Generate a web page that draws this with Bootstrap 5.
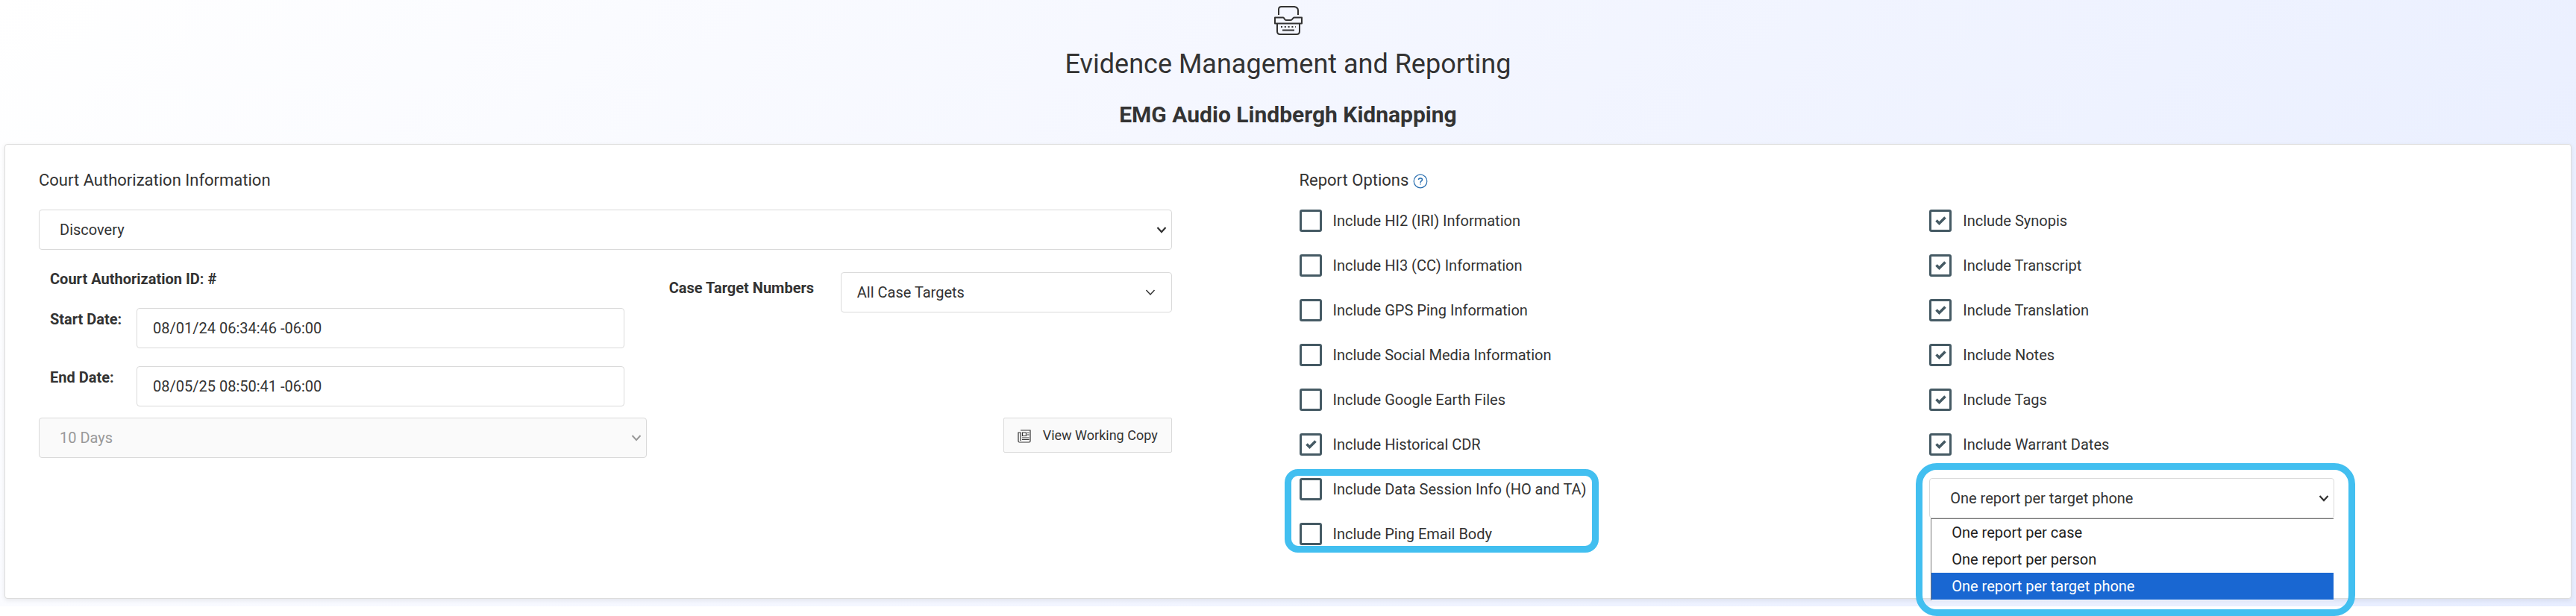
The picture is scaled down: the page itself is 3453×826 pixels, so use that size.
<!DOCTYPE html>
<html lang="en">
<head>
<meta charset="utf-8">
<meta name="viewport" content="width=device-width, initial-scale=1">
<title>Evidence Management and Reporting</title>
<link rel="stylesheet" href="https://cdn.jsdelivr.net/npm/bootstrap@5.3.0/dist/css/bootstrap.min.css">
<style>
  body { font-family: Roboto, "Liberation Sans", sans-serif; font-size: 20px; line-height: 30px; color: #333; background: #fff; min-height: 100vh; }
  .page-shell { background: linear-gradient(135deg, #fff 0%, #f5f7ff 40%, #e7edff 100%); padding: 0 6px 10px; }
  .page-head svg { display: block; margin: 0 auto; padding-top: 6px; }
  .page-title { font-size: 36px; line-height: 46px; font-weight: 400; margin: 15px 0 0; }
  .case-title { font-size: 30px; line-height: 36px; font-weight: 700; margin: 27px 0 0; }
  .panel { border: 1px solid #dcdcdc; border-radius: 4px; background: #fff; margin-top: 21px; min-height: 610px; padding: 33px 45px 0; box-shadow: 0 2px 6px rgba(0,0,0,.08); }
  .panel > .row, .panel .inner { --bs-gutter-x: 30px; }
  .section-title { font-size: 22px; line-height: 30px; font-weight: 400; margin: 0 0 24px; }
  .field { font-size: 20px; line-height: 30px; height: 54px; color: #333; border: 1px solid #dadada; border-radius: 4px; padding: 0 21px; background-color: #fff; }
  select.field { padding: 0 40px 0 27px; background-position: right 6px center; background-size: 14px 14px;
    background-image: url("data:image/svg+xml,%3Csvg xmlns='http://www.w3.org/2000/svg' viewBox='0 0 14 14'%3E%3Cpath d='M1.5 4l5.500 6 5.500-6' fill='none' stroke='%23333' stroke-width='2.200'/%3E%3C/svg%3E"); }
  select.field:disabled { background-color: #fafafa; color: #999; opacity: 1;
    background-image: url("data:image/svg+xml,%3Csvg xmlns='http://www.w3.org/2000/svg' viewBox='0 0 14 14'%3E%3Cpath d='M1.5 4l5.500 6 5.500-6' fill='none' stroke='%23999' stroke-width='2'/%3E%3C/svg%3E"); }
  select.targets { padding-left: 21px; background-position: right 21px center;
    background-image: url("data:image/svg+xml,%3Csvg xmlns='http://www.w3.org/2000/svg' viewBox='0 0 14 14'%3E%3Cpath d='M1.5 4l5.500 6 5.500-6' fill='none' stroke='%23333' stroke-width='1.500'/%3E%3C/svg%3E"); }
  .auth-fields { padding: 27px 30px 0 15px; }
  .auth-fields .auth-id { font-weight: 700; margin-bottom: 26px; line-height: 25px; }
  .date-row { margin-bottom: 24px; }
  .date-row + .date-row { margin-bottom: 15px; }
  .date-row label { width: 116px; flex: none; font-weight: 700; }
  .targets-row { padding: 30px 0 0; }
  .targets-row label { width: 230px; flex: none; font-weight: 700; padding-top: 6px; }
  .btn-copy { height: 47px; border: 1px solid #dadada; border-radius: 2px; background: #fafafa; color: #333; font-size: 18px; line-height: 30px; padding: 4px 18px; margin-bottom: 7px; }
  .btn-copy svg { margin-right: 16px; }
  .opt { height: 30px; margin: 0 0 30px; padding: 0; display: flex; align-items: center; }
  .opt .form-check-input { float: none; flex: none; width: 30px; height: 30px; margin: 0 15px 0 0; border: 3px solid #455a64; border-radius: 3px; background-color: #fff; background-size: 24px 24px; box-shadow: none; }
  .opt .form-check-input:checked { background-image: url("data:image/svg+xml,%3Csvg xmlns='http://www.w3.org/2000/svg' viewBox='0 0 24 24'%3E%3Cpath d='M6.500 11.500l4 4 8-8' fill='none' stroke='%23455a64' stroke-width='3.600'/%3E%3C/svg%3E"); }
  .ring { border: 9px solid #42bff0; pointer-events: none; position: absolute; }
  .ring-options { inset: -12px auto auto -20px; width: 421px; height: 112px; border-radius: 18px; }
  .ring-menu { inset: -20px -28px auto -18px; height: 205px; border-radius: 28px; }
  .per-report { width: 66.667%; }
  .report-menu { position: absolute; top: 54px; left: 2px; right: 1px; height: 110px; margin: 0; padding: 0; list-style: none; background: #fff; border-top: 1px solid #767676; border-left: 1px solid #767676; }
  .report-menu li { height: 36px; line-height: 36px; padding-left: 27px; color: #222; }
  .report-menu li.chosen { background: #1967d2; color: #fff; }
</style>
</head>
<body>
<div class="page-shell">
  <header class="page-head text-center">
    <svg width="38" height="48" viewBox="0 0 38 42" fill="none" stroke="#333" stroke-width="2" stroke-linejoin="round" aria-hidden="true">
      <path d="M6 14V6.500Q6 3 9.500 3H27Q32 4 32 8V14"/>
      <path d="M2 17.500H12C14 18 13.500 21 16 21H22C24.500 21 24.500 18 26.500 17.500H37V25.500H1V17.500Z"/>
      <path d="M4 25.500V36Q4 40 8 40H30Q34 40 34 36V25.500M11 34.500H27"/>
      <path d="M9 30H29" stroke-dasharray="2 2.800"/>
    </svg>
    <h1 class="page-title">Evidence Management and Reporting</h1>
    <h2 class="case-title">EMG Audio Lindbergh Kidnapping</h2>
  </header>

  <main class="panel">
    <div class="row">
      <section class="col-6">
        <h3 class="section-title">Court Authorization Information</h3>
        <div class="row inner">
          <div class="col-11"><select class="form-select field" aria-label="Court authorization"><option>Discovery</option></select></div>
        </div>
        <div class="row inner">
          <div class="col-6">
            <div class="auth-fields">
              <div class="auth-id">Court Authorization ID: #</div>
              <div class="date-row d-flex"><label for="start">Start Date:</label><input id="start" class="form-control field" value="08/01/24 06:34:46 -06:00"></div>
              <div class="date-row d-flex"><label for="end">End Date:</label><input id="end" class="form-control field" value="08/05/25 08:50:41 -06:00"></div>
            </div>
            <select class="form-select field" aria-label="Period" disabled><option>10 Days</option></select>
          </div>
          <div class="col-5 d-flex flex-column justify-content-between">
            <div class="targets-row d-flex">
              <label for="targets">Case Target Numbers</label>
              <select id="targets" class="form-select field targets"><option>All Case Targets</option></select>
            </div>
            <div class="text-end">
              <button type="button" class="btn btn-copy"><svg width="18" height="18" viewBox="0 0 18 18" fill="none" stroke="#333" stroke-width="1.200" aria-hidden="true"><path d="M4 1H17V15.500Q17 17 15.500 17H2.500Q1 17 1 15.500V4H4V15"/><path d="M6.500 4H11.500V8.500H6.500ZM13 4.500H15.500M13 7H15.500M6 11H15.500M6 13.500H15.500"/></svg>View Working Copy</button>
            </div>
          </div>
        </div>
      </section>

      <section class="col-3">
        <h3 class="section-title">Report Options <svg width="20" height="20" viewBox="0 0 20 20" fill="none" stroke="#2a6fb0" stroke-width="1.200" role="img" aria-label="Help"><circle cx="10" cy="10" r="8.800"/><path d="M7.500 8C7.500 5.200 12.500 5.200 12.500 8C12.500 9.800 10 9.600 10 12M10 13.200V14.500" stroke-width="1.500"/></svg></h3>
        <div class="form-check opt"><input class="form-check-input" type="checkbox" id="o1"><label for="o1">Include HI2 (IRI) Information</label></div>
        <div class="form-check opt"><input class="form-check-input" type="checkbox" id="o2"><label for="o2">Include HI3 (CC) Information</label></div>
        <div class="form-check opt"><input class="form-check-input" type="checkbox" id="o3"><label for="o3">Include GPS Ping Information</label></div>
        <div class="form-check opt"><input class="form-check-input" type="checkbox" id="o4"><label for="o4">Include Social Media Information</label></div>
        <div class="form-check opt"><input class="form-check-input" type="checkbox" id="o5"><label for="o5">Include Google Earth Files</label></div>
        <div class="form-check opt"><input class="form-check-input" type="checkbox" id="o6" checked><label for="o6">Include Historical CDR</label></div>
        <div class="position-relative">
          <div class="form-check opt"><input class="form-check-input" type="checkbox" id="o7"><label for="o7">Include Data Session Info (HO and TA)</label></div>
          <div class="form-check opt"><input class="form-check-input" type="checkbox" id="o8"><label for="o8">Include Ping Email Body</label></div>
          <div class="ring ring-options"></div>
        </div>
      </section>

      <section class="col-3">
        <div class="section-title" aria-hidden="true">&nbsp;</div>
        <div class="form-check opt"><input class="form-check-input" type="checkbox" id="p1" checked><label for="p1">Include Synopis</label></div>
        <div class="form-check opt"><input class="form-check-input" type="checkbox" id="p2" checked><label for="p2">Include Transcript</label></div>
        <div class="form-check opt"><input class="form-check-input" type="checkbox" id="p3" checked><label for="p3">Include Translation</label></div>
        <div class="form-check opt"><input class="form-check-input" type="checkbox" id="p4" checked><label for="p4">Include Notes</label></div>
        <div class="form-check opt"><input class="form-check-input" type="checkbox" id="p5" checked><label for="p5">Include Tags</label></div>
        <div class="form-check opt"><input class="form-check-input" type="checkbox" id="p6" checked><label for="p6">Include Warrant Dates</label></div>
        <div class="per-report position-relative">
          <select class="form-select field" aria-label="Report grouping"><option>One report per target phone</option></select>
          <ul class="report-menu" role="listbox" aria-label="Report grouping choices">
            <li role="option">One report per case</li>
            <li role="option">One report per person</li>
            <li role="option" class="chosen" aria-selected="true">One report per target phone</li>
          </ul>
          <div class="ring ring-menu"></div>
        </div>
      </section>
    </div>
  </main>
</div>
<script src="https://cdn.jsdelivr.net/npm/bootstrap@5.3.0/dist/js/bootstrap.bundle.min.js"></script>
</body>
</html>
